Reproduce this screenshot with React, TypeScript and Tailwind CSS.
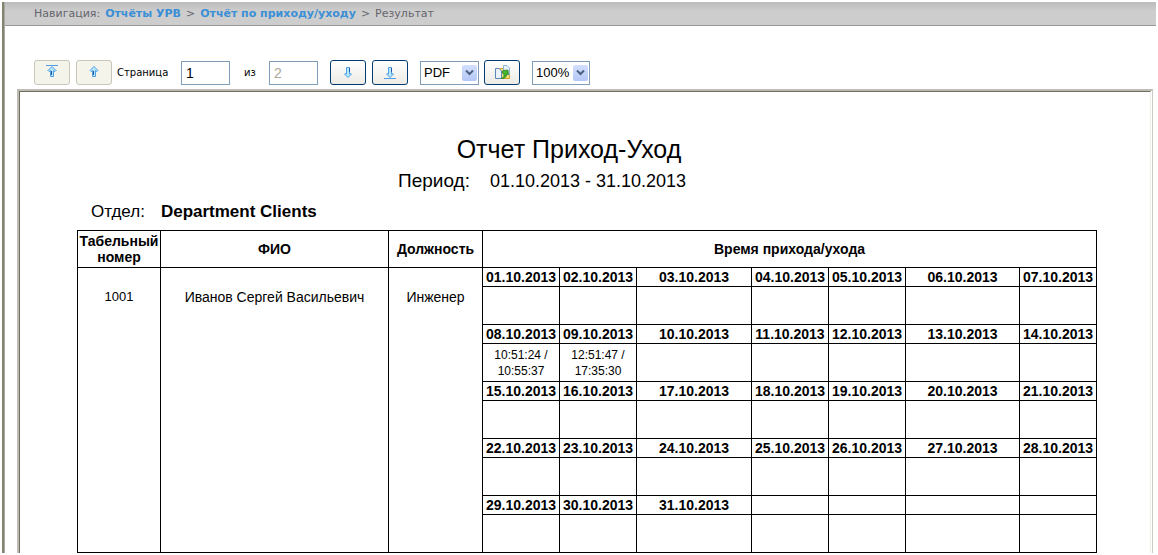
import React from "react";

const arrowUp = "M6 1.5 L10 5.5 L9 6.5 L7.5 5.5 V11.5 H4.5 V5.5 L3 6.5 L2 5.5 Z";
const arrowDown = "M6 11.5 L9.5 8 L8.5 7.5 L7.5 8 V1.5 H4.5 V8 L3.5 7.5 L2.5 8 Z";

const days = Array.from({ length: 31 }, (_, i) => `${String(i + 1).padStart(2, "0")}.10.2013`);
const weeks = [0, 7, 14, 21, 28].map((start) =>
  Array.from({ length: 7 }, (_, i) => days[start + i] ?? "")
);

const visits: Record<string, string[]> = {
  "08.10.2013": ["10:51:24 /", "10:55:37"],
  "09.10.2013": ["12:51:47 /", "17:35:30"],
};

const columns = [83, 228, 94, 77, 77, 115, 77, 77, 114, 77];

type PageButtonProps = {
  label: string;
  down?: boolean;
  edge?: boolean;
  disabled?: boolean;
};

const PageButton = ({ label, down, edge, disabled }: PageButtonProps) => (
  <button
    type="button"
    aria-label={label}
    disabled={disabled}
    className={
      disabled
        ? "flex h-[25px] w-9 items-center justify-center rounded-[3px] border border-[#c9c7ba] bg-[#f5f4ea] pb-0.5"
        : "flex h-[25px] w-9 items-center justify-center rounded-[3px] border border-[#003c74] bg-linear-to-b from-white to-[#ecebe5]"
    }
  >
    <svg width="12" height="13" viewBox="0 0 12 13" fill="none">
      <path d={down ? arrowDown : arrowUp} fill="#b5e6fb" stroke="#4f9fe6" />
      <path d={down ? "M7.5 2 V6" : "M5.5 6 V10"} stroke="#23589c" />
      {edge && <path d={down ? "M0 12.5 H12" : "M0 0.5 H12"} stroke="#4f9fe6" />}
    </svg>
  </button>
);

const ExportIcon = () => (
  <svg width="17" height="16" viewBox="0 0 17 16" fill="none">
    <path d="M5.5 3.5 H9 L10 5 H15.5 V13.5 H5.5 Z" fill="#f7e27a" stroke="#d0a22e" />
    <path d="M9.5 0.5 H13 L15.5 3 V9.5 H9.5 Z" fill="#e6f1fc" stroke="#8fb4da" />
    <path d="M1.5 3.5 H5 L7.5 6 V13.5 H1.5 Z" fill="#eaf3fb" stroke="#5d87b6" />
    <path d="M7.5 13.5 C9.5 12.5 10.2 11 10 9 L8 7.5 L9 5.5 L14 5 L14.5 9.5 L12.8 8.8 C13 11.5 10.8 13.8 7.5 13.5 Z" fill="#45b52c" stroke="#237a17" strokeWidth="0.7" />
  </svg>
);

type PickerProps = {
  label: string;
  value: string;
  className: string;
};

const Picker = ({ label, value, className }: PickerProps) => (
  <div className={`grid h-6 items-center border border-[#7f9db9] bg-white ${className}`}>
    <select
      aria-label={label}
      defaultValue={value}
      className="col-start-1 row-start-1 h-full w-full appearance-none pl-[3px] text-[13px] leading-4"
    >
      <option>{value}</option>
    </select>
    <span className="pointer-events-none col-start-1 row-start-1 mr-px flex h-4 w-[15px] items-center justify-center justify-self-end rounded-xs bg-linear-to-b from-[#d3dffd] to-[#b4c8f6]">
      <svg width="9" height="7" viewBox="0 0 9 7" fill="none">
        <path d="M1 1.5 L4.5 5 L8 1.5" stroke="#4d6185" strokeWidth="2" />
      </svg>
    </span>
  </div>
);

const Breadcrumbs = () => (
  <nav className="flex h-6 items-center gap-[5px] border-b border-[#999] bg-linear-to-b from-[#bcbcbc] to-[#cdcdcd] to-40% pt-0.5 pl-[29px] [font-family:Verdana,'DejaVu_Sans',sans-serif] text-[11px] text-[#65656d]">
    <span>Навигация:</span>
    <a href="#reports" className="font-bold text-[#3b8fd6]">Отчёты УРВ</a>
    <span>&gt;</span>
    <a href="#attendance" className="font-bold text-[#3b8fd6]">Отчёт по приходу/уходу</a>
    <span>&gt;</span>
    <span>Результат</span>
  </nav>
);

const Toolbar = () => (
  <div className="mt-[34px] flex h-[25px] items-center pl-[29px] text-black">
    <div className="flex gap-1.5">
      <PageButton label="Первая страница" edge disabled />
      <PageButton label="Предыдущая страница" disabled />
    </div>
    <label htmlFor="page" className="ml-[5px] w-16 [font-family:Verdana,'DejaVu_Sans',sans-serif] text-[10px]">
      Страница
    </label>
    <input id="page" defaultValue="1" className="h-6 w-[49px] border border-[#7f9db9] bg-white px-1 text-sm" />
    <label htmlFor="total" className="ml-3.5 w-[25px] [font-family:Verdana,'DejaVu_Sans',sans-serif] text-[10px]">
      из
    </label>
    <input id="total" defaultValue="2" disabled className="h-6 w-[49px] border border-[#7f9db9] bg-white px-1 text-sm text-[#aca899]" />
    <div className="ml-3 flex gap-1.5">
      <PageButton label="Следующая страница" down />
      <PageButton label="Последняя страница" down edge />
    </div>
    <Picker label="Формат" value="PDF" className="ml-3 w-[59px]" />
    <button
      type="button"
      aria-label="Экспорт"
      className="ml-[5px] flex h-[25px] w-9 items-center justify-center rounded-[3px] border border-[#003c74] bg-linear-to-b from-white to-[#ecebe5]"
    >
      <ExportIcon />
    </button>
    <Picker label="Масштаб" value="100%" className="ml-3 w-[58px]" />
  </div>
);

const ReportTable = () => (
  <table className="mt-[3px] w-[1020px] table-fixed border-collapse text-center text-sm leading-4 [&_td]:border [&_td]:border-black [&_td]:p-0 [&_th]:border [&_th]:border-black [&_th]:p-0">
    <colgroup>
      {columns.map((width, i) => (
        <col key={i} style={{ width }} />
      ))}
    </colgroup>
    <thead>
      <tr className="h-[37px]">
        <th>Табельный номер</th>
        <th>ФИО</th>
        <th>Должность</th>
        <th colSpan={7}>Время прихода/ухода</th>
      </tr>
    </thead>
    <tbody>
      {weeks.map((week, w) => (
        <React.Fragment key={w}>
          <tr className="h-[19px]">
            {w === 0 && (
              <>
                <td rowSpan={10} className="align-top"><div className="pt-[21px] text-[13px] leading-4">1001</div></td>
                <td rowSpan={10} className="align-top"><div className="pt-[21px]">Иванов Сергей Васильевич</div></td>
                <td rowSpan={10} className="align-top"><div className="pt-[21px]">Инженер</div></td>
              </>
            )}
            {week.map((day, i) => (
              <th key={i} className="whitespace-nowrap">{day}</th>
            ))}
          </tr>
          <tr className="h-[38px] text-xs leading-4">
            {week.map((day, i) => (
              <td key={i}>
                {visits[day]?.map((time) => <div key={time}>{time}</div>)}
              </td>
            ))}
          </tr>
        </React.Fragment>
      ))}
    </tbody>
  </table>
);

export default function App() {
  return (
    <div className="bg-white pt-0.5 pl-0.5 [font-family:'Liberation_Sans',Arial,sans-serif]">
      <div className="border-l-2 border-[#83836f]">
        <div className="border-l border-[#a9a9a4]">
          <div className="mr-0.5">
            <Breadcrumbs />
            <Toolbar />
          </div>
          <main className="mt-1 mr-[5px] ml-3 border-t-2 border-r border-l-2 border-t-[#bdbbb2] border-r-[#cccac2] border-l-[#bdbbb2] pr-px text-black">
            <div className="border-t border-r border-l border-t-[#716f64] border-r-[#f1efe2] border-l-[#716f64] pl-[57px]">
              <div className="w-[1020px] pt-[41px]">
                <h1 className="pr-9 text-center text-[25px] leading-8">Отчет Приход-Уход</h1>
                <div className="flex items-baseline gap-5 pl-[321px] text-lg leading-8">
                  <span className="text-[19px]">Период:</span>
                  <span>01.10.2013 - 31.10.2013</span>
                </div>
                <div className="flex gap-4 pl-3.5 text-[17px] leading-[30px]">
                  <span>Отдел:</span>
                  <span className="font-bold">Department Clients</span>
                </div>
                <ReportTable />
              </div>
            </div>
          </main>
        </div>
      </div>
    </div>
  );
}
